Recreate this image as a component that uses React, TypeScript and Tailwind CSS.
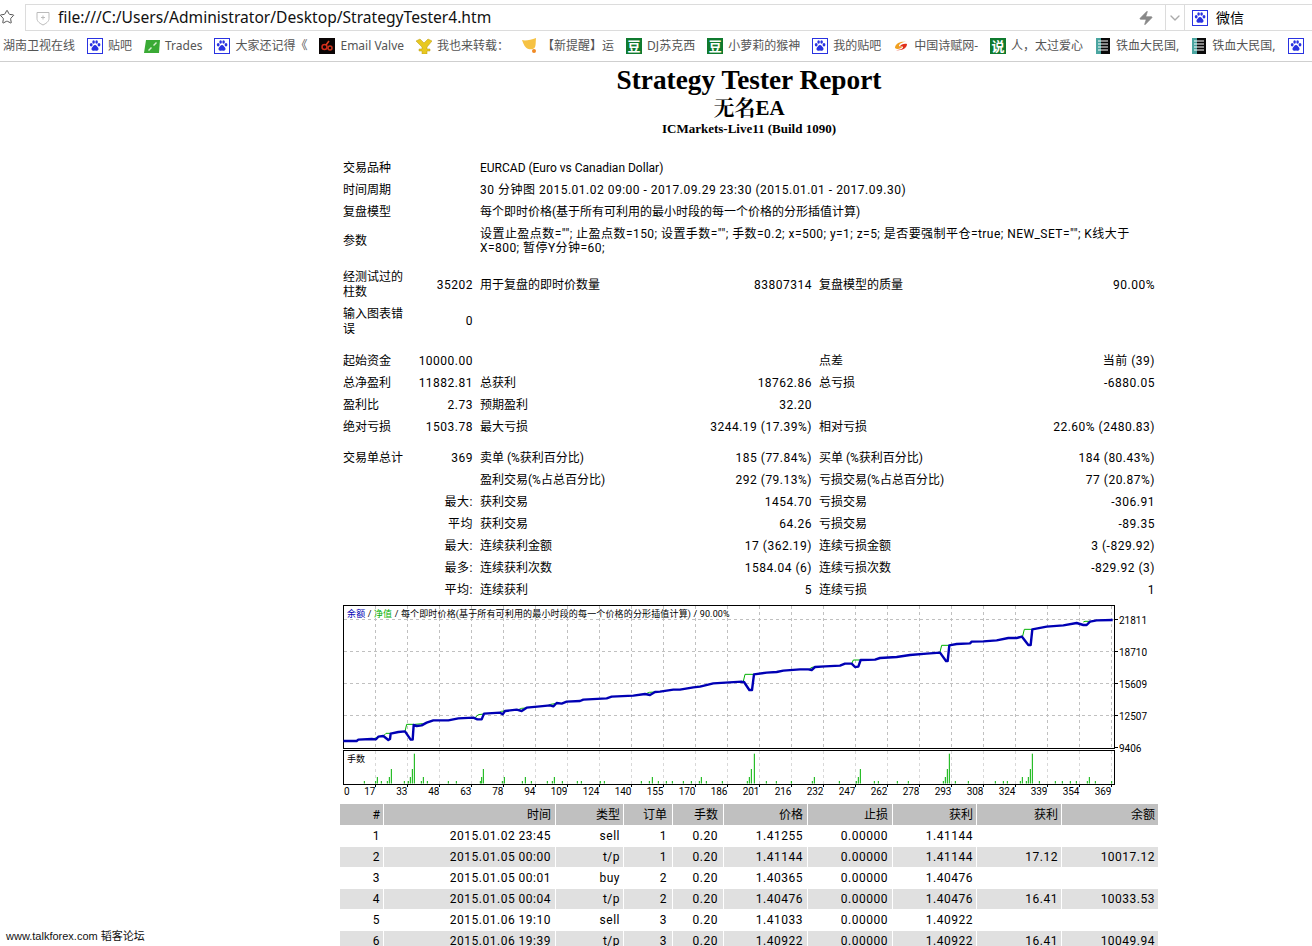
import { Star, ChevronDown, Zap } from "lucide-react";

function Paw() {
  return (
    <svg width="16" height="16" viewBox="0 0 16 16" className="shrink-0">
      <rect x="0.5" y="0.5" width="15" height="15" fill="#fff" stroke="#2932e1" />
      <g fill="#2932e1">
        <ellipse cx="4.2" cy="6.8" rx="1.4" ry="1.7" />
        <ellipse cx="6.6" cy="4" rx="1.3" ry="1.7" />
        <ellipse cx="9.6" cy="4" rx="1.3" ry="1.7" />
        <ellipse cx="12" cy="6.8" rx="1.4" ry="1.7" />
        <path d="M8 7c-1.6 0-2 1.500-3 2.500-1 1.200-.6 3.200 1 3.200.8 0 1.300-.3 2-.3s1.200.3 2 .3c1.600 0 2-2 1-3.200C10 8.500 9.600 7 8 7z" />
      </g>
    </svg>
  );
}

function GreenLeaf() {
  return (
    <svg width="16" height="16" viewBox="0 0 16 16" className="shrink-0">
      <path d="M2 2h14l-1 13H0z" fill="#3aaa35" />
      <path d="M4 12l3-3 1 1-3 3zM9 7l3-3 1 1-3 3z" fill="#d8f0d0" />
    </svg>
  );
}

function DarkIcon() {
  return (
    <svg width="16" height="16" viewBox="0 0 16 16" className="shrink-0">
      <rect width="16" height="16" fill="#0a0505" />
      <circle cx="5.500" cy="9" r="2.500" fill="none" stroke="#d42a1a" strokeWidth="1.500" />
      <circle cx="11" cy="10" r="2" fill="none" stroke="#c8341c" strokeWidth="1.500" />
      <path d="M7 7l3-4" stroke="#e04020" strokeWidth="1.500" />
    </svg>
  );
}

function YellowIcon() {
  return (
    <svg width="16" height="16" viewBox="0 0 16 16" className="shrink-0">
      <path d="M0 3l4-2 4 4 4-4 4 2-5 6v2h3v2h-3v3H6v-3H3v-2h3V9z" fill="#e8c820" stroke="#b89a10" strokeWidth="0.500" />
    </svg>
  );
}

function BellIcon() {
  return (
    <svg width="16" height="16" viewBox="0 0 16 16" className="shrink-0">
      <path d="M1 2c3 1 9 0 14-2-.5 5 0 8-1.500 10-1.500 1.500-4 1.500-6 1C4 10 2.500 6 1 2z" fill="#f6c243" />
      <circle cx="13" cy="13" r="2" fill="#f08a24" />
    </svg>
  );
}

function GreenChar({ ch }: { ch: string }) {
  return (
    <span className="flex h-4 w-4 shrink-0 items-center justify-center bg-[#0f7a2e] text-[13px] leading-none font-bold text-white">
      {ch}
    </span>
  );
}

function SwirlIcon() {
  return (
    <svg width="16" height="16" viewBox="0 0 16 16" className="shrink-0">
      <path d="M2 10c0-4 5-7 11-6-4 0-7 2-7 4 0 1 2 1 4 0-2 3-6 4-8 2z" fill="#f0a020" />
      <path d="M14 6c0 4-5 7-11 6 4 0 7-1 7-3 0-1-2-1-4 0 2-3 6-4 8-3z" fill="#e0301a" />
    </svg>
  );
}

function StripeIcon() {
  return (
    <svg width="16" height="16" viewBox="0 0 16 16" className="shrink-0">
      <rect x="1" width="6" height="16" fill="#4aa5a0" />
      <rect x="6" width="9" height="16" fill="#0a0a0a" />
      <path d="M3 3h10M3 6h10M3 9h10M3 12h10" stroke="#fff" strokeWidth="1.200" />
    </svg>
  );
}

const bookmarks = [
  { icon: null, label: "湖南卫视在线" },
  { icon: <Paw />, label: "贴吧" },
  { icon: <GreenLeaf />, label: "Trades" },
  { icon: <Paw />, label: "大家还记得《" },
  { icon: <DarkIcon />, label: "Email Valve" },
  { icon: <YellowIcon />, label: "我也来转载：" },
  { icon: <BellIcon />, label: "【新提醒】运" },
  { icon: <GreenChar ch="豆" />, label: "DJ苏克西" },
  { icon: <GreenChar ch="豆" />, label: "小萝莉的猴神" },
  { icon: <Paw />, label: "我的贴吧" },
  { icon: <SwirlIcon />, label: "中国诗赋网-" },
  { icon: <GreenChar ch="说" />, label: "人，太过爱心" },
  { icon: <StripeIcon />, label: "铁血大民国," },
  { icon: <StripeIcon />, label: "铁血大民国," },
  { icon: <Paw />, label: "" },
];

type ReportRow = { h: string; cells: string[] };

const summary: ReportRow[] = [
  { h: "h-[36px]", cells: ["经测试过的柱数", "35202", "用于复盘的即时价数量", "83807314", "复盘模型的质量", "90.00%"] },
  { h: "h-[37px]", cells: ["输入图表错误", "0", "", "", "", ""] },
  { h: "h-[10px]", cells: ["", "", "", "", "", ""] },
  { h: "h-[22px]", cells: ["起始资金", "10000.00", "", "", "点差", "当前 (39)"] },
  { h: "h-[22px]", cells: ["总净盈利", "11882.81", "总获利", "18762.86", "总亏损", "-6880.05"] },
  { h: "h-[22px]", cells: ["盈利比", "2.73", "预期盈利", "32.20", "", ""] },
  { h: "h-[22px]", cells: ["绝对亏损", "1503.78", "最大亏损", "3244.19 (17.39%)", "相对亏损", "22.60% (2480.83)"] },
  { h: "h-[9px]", cells: ["", "", "", "", "", ""] },
  { h: "h-[22px]", cells: ["交易单总计", "369", "卖单 (%获利百分比)", "185 (77.84%)", "买单 (%获利百分比)", "184 (80.43%)"] },
  { h: "h-[22px]", cells: ["", "", "盈利交易(%占总百分比)", "292 (79.13%)", "亏损交易(%占总百分比)", "77 (20.87%)"] },
  { h: "h-[22px]", cells: ["", "最大:", "获利交易", "1454.70", "亏损交易", "-306.91"] },
  { h: "h-[22px]", cells: ["", "平均", "获利交易", "64.26", "亏损交易", "-89.35"] },
  { h: "h-[22px]", cells: ["", "最大:", "连续获利金额", "17 (362.19)", "连续亏损金额", "3 (-829.92)"] },
  { h: "h-[22px]", cells: ["", "最多:", "连续获利次数", "1584.04 (6)", "连续亏损次数", "-829.92 (3)"] },
  { h: "h-[22px]", cells: ["", "平均:", "连续获利", "5", "连续亏损", "1"] },
];

const trades = [
  ["1", "2015.01.02 23:45", "sell", "1", "0.20", "1.41255", "0.00000", "1.41144", "", ""],
  ["2", "2015.01.05 00:00", "t/p", "1", "0.20", "1.41144", "0.00000", "1.41144", "17.12", "10017.12"],
  ["3", "2015.01.05 00:01", "buy", "2", "0.20", "1.40365", "0.00000", "1.40476", "", ""],
  ["4", "2015.01.05 00:04", "t/p", "2", "0.20", "1.40476", "0.00000", "1.40476", "16.41", "10033.53"],
  ["5", "2015.01.06 19:10", "sell", "3", "0.20", "1.41033", "0.00000", "1.40922", "", ""],
  ["6", "2015.01.06 19:39", "t/p", "3", "0.20", "1.40922", "0.00000", "1.40922", "16.41", "10049.94"],
];

const tradeHead = ["#", "时间", "类型", "订单", "手数", "价格", "止损", "获利", "获利", "余额"];
const tradePad = ["pr-[3px]", "pr-[4px]", "pr-[3px]", "pr-[5px]", "pr-[5px]", "pr-[4px]", "pr-[4px]", "pr-[3px]", "pr-[3px]", "pr-[3px]"];

// points read off the chart, in 3x crop coordinates
const left = (pts: number[][]) => pts.map(([x, y]) => `${340 + x / 3},${600 + y / 3}`).join(" ");
const right = (pts: number[][]) => pts.map(([x, y]) => `${740 + x / 3},${600 + y / 3}`).join(" ");

const balance =
  left([[10,420],[50,420],[55,416],[95,414],[108,415],[115,407],[130,405],[145,417],[150,414],[152,398],[175,393],[195,391],[212,416],[218,416],[221,372],[230,375],[245,373],[260,365],[280,358],[325,358],[355,352],[400,350],[412,355],[425,355],[432,338],[480,335],[488,340],[495,330],[530,326],[545,330],[560,320],[600,316],[630,313],[640,316],[650,306],[665,308],[680,302],[720,300],[730,296],[800,292],[815,287],[880,284],[915,279],[930,282],[945,273],[960,272],[1000,266],[1020,266],[1060,259],[1080,257],[1120,247],[1205,242]]) +
  " " +
  right([[5,243],[12,243],[28,267],[36,267],[42,220],[80,215],[110,213],[130,209],[180,205],[205,205],[215,207],[225,198],[255,196],[300,194],[315,188],[335,188],[345,198],[355,197],[362,177],[405,176],[420,171],[470,168],[510,162],[560,158],[600,155],[618,180],[623,180],[628,133],[650,129],[690,127],[695,122],[730,121],[770,118],[805,111],[830,111],[846,107],[865,132],[872,132],[877,85],[920,77],[970,73],[1010,66],[1030,72],[1040,72],[1050,62],[1070,58],[1118,57]]);

const equity = [
  left([[98,414],[110,410],[116,407]]),
  left([[130,405],[138,397],[152,397]]),
  left([[195,391],[200,370],[221,370]]),
  left([[225,370],[248,368]]),
  left([[405,350],[415,341],[432,339]]),
  left([[478,335],[484,331],[495,330]]),
  left([[535,326],[545,322],[558,321]]),
  left([[625,313],[632,310],[645,308]]),
  left([[918,278],[928,274],[945,273]]),
  left([[1065,259],[1072,256],[1082,256]]),
  right([[10,241],[15,220],[42,220]]),
  right([[208,204],[216,199],[225,198]]),
  right([[335,188],[340,177],[362,177]]),
  right([[600,153],[605,133],[628,133]]),
  right([[835,108],[848,105],[853,85],[877,85]]),
  right([[1030,63],[1035,61],[1050,61]]),
];

const lots: [number, number][] = [
  [73,540],[107,540],[112,528],[124,540],[142,540],[148,528],[154,504],[193,540],[205,540],[211,528],[217,504],[223,458],[244,540],[250,528],[262,540],[325,540],[349,540],[421,540],[425,528],[430,504],[487,540],[493,528],[547,540],[556,528],[574,540],[622,540],[637,540],[643,528],[667,540],[712,540],[724,540],[781,540],[793,540],[904,540],[928,540],[937,528],[955,540],[979,540],[997,540],[1030,540],[1054,540],[1078,540],[1084,528],[1099,540],[1147,540],[1222,540],[1228,528],[1234,504],
];
const lotsRight: [number, number][] = [
  [43,458],[79,540],[109,540],[154,540],[217,540],[223,528],[298,540],[349,540],[355,528],[361,504],[403,540],[415,540],[472,540],[505,540],[610,540],[616,528],[622,504],[628,458],[646,540],[685,540],[766,540],[790,540],[802,540],[841,540],[847,528],[859,540],[865,528],[871,504],[877,458],[898,540],[946,540],[967,540],[991,540],[1009,540],[1042,540],[1048,528],[1066,540],[1115,540],
];

const ticks = ["17","33","48","63","78","94","109","124","140","155","170","186","201","216","232","247","262","278","293","308","324","339","354","369"];

function Chart() {
  const gridX = ticks.map((_, i) => 375 + i * 32);
  return (
    <svg width="818" height="200" viewBox="340 600 818 200" className="block text-black">
      <rect x="343.500" y="604.500" width="771" height="143" fill="#fff" stroke="#000" />
      {gridX.map((x) => (
        <line key={x} x1={x + 0.5} x2={x + 0.5} y1="605" y2="747" stroke="#c0c0c0" strokeDasharray="3 3" />
      ))}
      {[618, 650, 682, 714].map((y) => (
        <line key={y} x1="344" x2="1114" y1={y + 0.5} y2={y + 0.5} stroke="#c0c0c0" strokeDasharray="3 3" />
      ))}
      {equity.map((p, i) => (
        <polyline key={i} points={p} fill="none" stroke="#00b000" strokeWidth="1" />
      ))}
      <polyline points={balance} fill="none" stroke="#0000b4" strokeWidth="2.400" strokeLinejoin="round" />
      <text x="347" y="616" fontSize="9" letterSpacing="0.15" fill="#000">
        <tspan fill="#0000b4">余额</tspan> / <tspan fill="#00b000">净值</tspan> / 每个即时价格(基于所有可利用的最小时段的每一个价格的分形插值计算) / 90.00%
      </text>
      <rect x="343.500" y="749.500" width="771" height="34" fill="#fff" stroke="#000" />
      {gridX.map((x) => (
        <line key={x} x1={x + 0.5} x2={x + 0.5} y1="750" y2="783" stroke="#d8d8d8" strokeDasharray="3 3" />
      ))}
      {lots.map(([x, y]) => (
        <rect key={x} x={340 + x / 3 - 0.5} y={600 + y / 3} width="1" height={782.500 - 600 - y / 3} fill="#00b000" />
      ))}
      {lotsRight.map(([x, y]) => (
        <rect key={x} x={740 + x / 3 - 0.5} y={600 + y / 3} width="1" height={782.500 - 600 - y / 3} fill="#00b000" />
      ))}
      <text x="347" y="761" fontSize="9" fill="#000">手数</text>
      <text x="344" y="794" fontSize="10" fill="#000">0</text>
      {ticks.map((t, i) => (
        <g key={t}>
          <line x1={gridX[i] + 0.5} x2={gridX[i] + 0.5} y1="784" y2="786" stroke="#000" />
          <text x={gridX[i] + 0.5} y="794" fontSize="10" fill="#000" textAnchor="end">{t}</text>
        </g>
      ))}
      {[["21811", 618], ["18710", 650], ["15609", 682], ["12507", 714], ["9406", 746]].map(([t, y]) => (
        <g key={t}>
          <line x1="1115" x2="1118" y1={Number(y) + 0.5} y2={Number(y) + 0.5} stroke="#000" />
          <text x="1119" y={Number(y) + 5} fontSize="10" fill="#000">{t}</text>
        </g>
      ))}
    </svg>
  );
}

const reportCols = "grid grid-cols-[67px_69px_200px_139px_204px_139px]";

export default function App() {
  return (
    <div className="relative h-[946px] overflow-hidden bg-white text-xs text-black [font-family:Roboto,'Noto_Sans_CJK_SC',sans-serif]">
      <div className="flex h-[31px] items-end bg-white">
        <Star className="mb-[6px] ml-[-1px] h-4 w-4 shrink-0 self-end text-[#555]" strokeWidth={1.5} />
        <div className="ml-[10px] flex h-[27px] flex-1 items-center border-t border-b border-l border-[#dcdcdc] pl-[10px]">
          <svg width="14" height="16" viewBox="0 0 14 16" className="shrink-0">
            <path d="M1 2.500h12v6c0 3-3 5-6 6.500-3-1.500-6-3.500-6-6.500z" fill="#fff" stroke="#bbb" />
            <path d="M5 7.500h4M7 5.500v4" stroke="#bbb" />
          </svg>
          <span className="ml-[8px] text-[15.600px] text-[#111] [font-family:'Noto_Sans',sans-serif]">
            file:///C:/Users/Administrator/Desktop/StrategyTester4.htm
          </span>
          <Zap className="mr-[11px] ml-auto h-4 w-4 text-[#888]" fill="#888" strokeWidth={1} />
          <div className="flex h-full w-[20px] items-center justify-center border-x border-[#dcdcdc]">
            <ChevronDown className="h-4 w-4 text-[#aaa]" />
          </div>
          <div className="flex w-[127px] items-center gap-[8px] pl-[7px]">
            <Paw />
            <span className="text-sm">微信</span>
          </div>
        </div>
      </div>

      <div className="flex h-[31px] items-center gap-3 overflow-hidden border-b border-[#cfcfcf] pl-[3px] text-[#555] [font-family:'Noto_Sans','Noto_Sans_CJK_SC',sans-serif]">
        {bookmarks.map((b, i) => (
          <div key={i} className="flex shrink-0 items-center gap-[5px]">
            {b.icon}
            {b.label && <span>{b.label}</span>}
          </div>
        ))}
      </div>

      <div className="ml-[340px] w-[818px]">
        <div className="flex flex-col items-center pt-[3px] font-bold [font-family:'Liberation_Serif','Noto_Serif_CJK_SC','Noto_Sans_CJK_SC',serif]">
          <div className="h-[30px] text-[27.300px] leading-[30px]">Strategy Tester Report</div>
          <div className="mt-[1px] h-[25px] text-[21px] leading-[25px]">无名EA</div>
          <div className="h-[16px] text-[13px] leading-[16px]">ICMarkets-Live11 (Build 1090)</div>
        </div>

        <div className="mt-[20px] grid grid-cols-[136px_1fr]">
          <div className="flex h-[22px] items-center pl-[3px]">交易品种</div>
          <div className="flex h-[22px] items-center pl-[4px]">EURCAD (Euro vs Canadian Dollar)</div>
          <div className="flex h-[22px] items-center pl-[3px]">时间周期</div>
          <div className="flex h-[22px] items-center pl-[4px] tracking-[0.5px]">30 分钟图 2015.01.02 09:00 - 2017.09.29 23:30 (2015.01.01 - 2017.09.30)</div>
          <div className="flex h-[22px] items-center pl-[3px]">复盘模型</div>
          <div className="flex h-[22px] items-center pl-[4px]">每个即时价格(基于所有可利用的最小时段的每一个价格的分形插值计算)</div>
          <div className="flex h-[36px] items-center pl-[3px]">参数</div>
          <div className="flex h-[36px] items-center pl-[4px] leading-[14px] tracking-[0.45px]">
            <div>
              设置止盈点数=""; 止盈点数=150; 设置手数=""; 手数=0.2; x=500; y=1; z=5; 是否要强制平仓=true; NEW_SET=""; K线大于
              <br />
              X=800; 暂停Y分钟=60;
            </div>
          </div>
        </div>

        <div className="mt-[8px]">
          {summary.map((row, i) => (
            <div key={i} className={`${reportCols} ${row.h} items-center leading-[15px]`}>
              <div className="pl-[3px]">{row.cells[0]}</div>
              <div className="pr-[3px] text-right tracking-[0.5px]">{row.cells[1]}</div>
              <div className="pl-[4px]">{row.cells[2]}</div>
              <div className="pr-[3px] text-right tracking-[0.5px]">{row.cells[3]}</div>
              <div className="pl-[4px]">{row.cells[4]}</div>
              <div className="pr-[3px] text-right tracking-[0.5px]">{row.cells[5]}</div>
            </div>
          ))}
        </div>

        <Chart />

        <div className="mt-[3px] flex flex-col gap-px">
          <div className="grid h-[21px] grid-cols-[43px_171px_67px_48px_50px_83px_84px_83px_84px_96px] items-center gap-x-px">
            {tradeHead.map((h, i) => (
              <div key={i} className={`flex h-full items-center justify-end bg-[#c0c0c0] ${tradePad[i]}`}>{h}</div>
            ))}
          </div>
          {trades.map((row, r) => (
            <div key={r} className="grid h-[20px] grid-cols-[43px_171px_67px_48px_50px_83px_84px_83px_84px_96px] gap-x-px">
              {row.map((c, i) => (
                <div key={i} className={`flex h-full items-center justify-end tracking-[0.5px] ${tradePad[i]} ${r % 2 === 1 ? "bg-[#e0e0e0]" : "bg-white"}`}>{c}</div>
              ))}
            </div>
          ))}
        </div>
      </div>

      <div className="absolute bottom-[2px] left-[6px] text-[11px] text-[#111] [font-family:'Liberation_Sans','Noto_Sans_CJK_SC',sans-serif]">www.talkforex.com 韬客论坛</div>
    </div>
  );
}
